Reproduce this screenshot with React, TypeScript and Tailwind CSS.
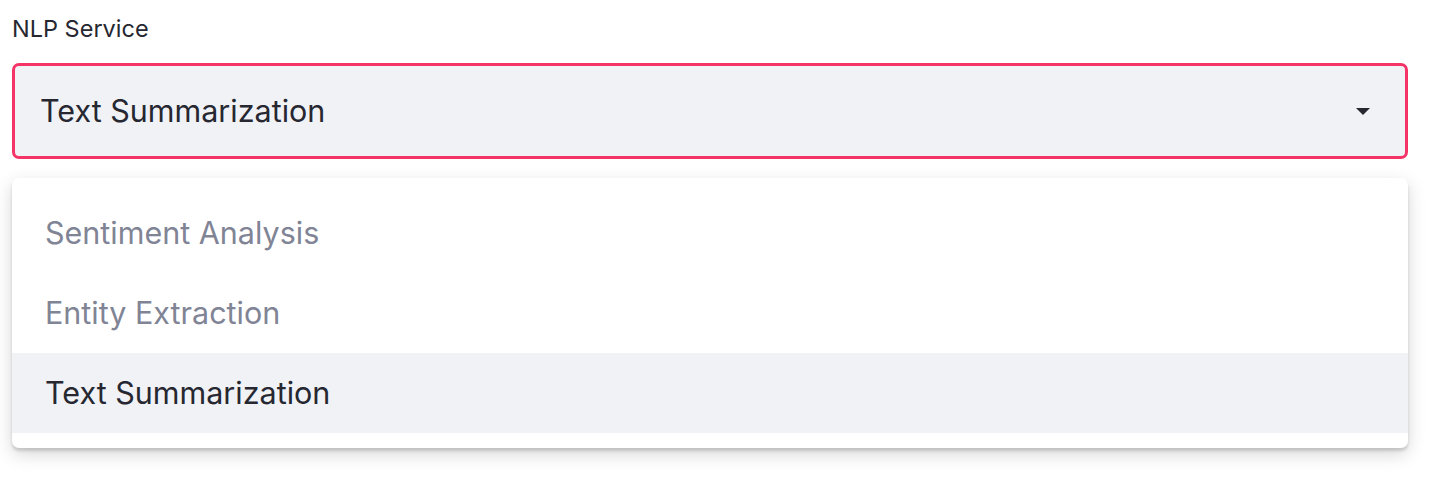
import React from 'react';

const options = ['Sentiment Analysis', 'Entity Extraction', 'Text Summarization'];

export default function App() {
  const selected = 'Text Summarization';

  return (
    <div className="w-[1444px] h-[480px] bg-white pl-3 pr-9 pt-[14px] text-[#262730]" style={{ fontFamily: 'Inter, "Noto Sans", sans-serif' }}>
      <div className="text-[23.5px] leading-[30px] mb-[19px]">NLP Service</div>

      {/* Select box */}
      <div className="h-[96px] rounded-[7px] border-[3px] border-[#f63366] bg-[#f0f2f6] flex items-center pl-[25px] pr-[34px]">
        <span className="flex-1 text-[30.5px]">{selected}</span>
        <svg width="16" height="9" viewBox="0 0 16 9" className="text-[#262730]">
          <path d="M1 1h14L8 8z" fill="currentColor" />
        </svg>
      </div>

      {/* Menu */}
      <div className="mt-[19px] rounded-[7px] bg-white py-[15px] shadow-[0_6px_18px_rgba(0,0,0,0.16),0_3px_3px_rgba(0,0,0,0.14)]">
        {options.map((opt) => (
          <div
            key={opt}
            className={
              opt === selected
                ? 'h-20 flex items-center pl-[33px] text-[30.5px] bg-[#f0f2f6] text-[#262730]'
                : 'h-20 flex items-center pl-[33px] text-[30.5px] text-[#808495]'
            }
          >
            {opt}
          </div>
        ))}
      </div>
    </div>
  );
}
